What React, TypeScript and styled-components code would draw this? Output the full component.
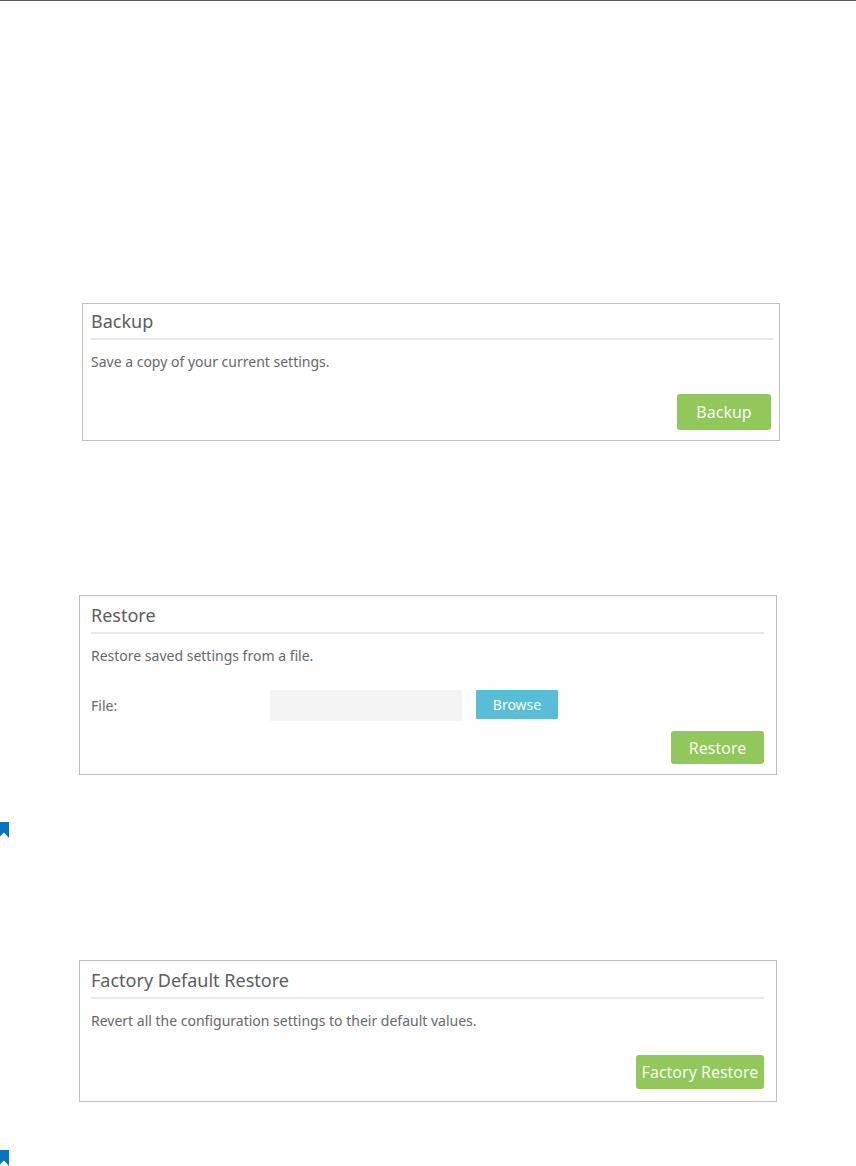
import React from 'react';
import styled, { createGlobalStyle } from 'styled-components';

const GlobalStyle = createGlobalStyle`
  * { box-sizing: border-box; }
  body {
    margin: 0;
    background: #fff;
    color: #68686c;
    font-family: "Noto Sans", "Open Sans", sans-serif;
  }
`;

const Page = styled.main`
  display: flex;
  flex-direction: column;
  border-top: 1px solid #58595b;
  padding-top: 302px;
`;

const Card = styled.section<{ $margin: string; $padding: string }>`
  display: flex;
  flex-direction: column;
  margin: ${p => p.$margin};
  padding: ${p => p.$padding};
  border: 1px solid #bfbfbf;
  background: #fefefe;
`;

const Title = styled.h2`
  margin: 0;
  padding-bottom: 4px;
  border-bottom: 2px solid #e8e8e8;
  color: #5c5d61;
  font-size: 18px;
  font-weight: 400;
  line-height: 26px;
`;

const Text = styled.p`
  margin: 12px 0 0;
  font-size: 14px;
  line-height: 20px;
`;

const FileRow = styled.div`
  display: grid;
  grid-template-columns: 179px 192px auto;
  justify-content: start;
  align-items: start;
  margin-top: 24px;
`;

const FileLabel = styled.label`
  font-size: 14px;
  line-height: 32px;
`;

const FileInput = styled.input`
  width: 100%;
  height: 31px;
  padding: 0 8px;
  border: 0;
  background: #f5f4f4;
  color: inherit;
  font: inherit;
  font-size: 14px;
`;

const Button = styled.button`
  padding: 0;
  border: 0;
  border-radius: 3px;
  background: #92c75b;
  color: #f4faec;
  font: inherit;
  font-size: 16px;
`;

const BrowseButton = styled(Button)`
  width: 82px;
  height: 29px;
  margin-left: 14px;
  border-radius: 1px;
  background: #59bdd7;
  font-size: 14px;
`;

const ActionButton = styled(Button)<{ $width: number; $height: number }>`
  width: ${p => p.$width}px;
  height: ${p => p.$height}px;
`;

const Actions = styled.div<{ $gap: number; $inset?: number }>`
  display: flex;
  justify-content: flex-end;
  margin-top: ${p => p.$gap}px;
  padding-right: ${p => p.$inset ?? 0}px;
`;

const Spacer = styled.div<{ $size: number }>`
  height: ${p => p.$size}px;
`;

const Mark = styled.svg`
  display: block;
  width: 9px;
  height: 16px;
`;

const Bookmark = () => (
  <Mark viewBox="0 0 9 16" aria-hidden="true">
    <path d="M0 0H9V16L4 10.5L0 14.5Z" fill="#0873c0" />
  </Mark>
);

export default function App() {
  return (
    <>
      <GlobalStyle />
      <Page>
        <Card $margin="0 76px 0 82px" $padding="4px 6px 10px 8px">
          <Title>Backup</Title>
          <Text>Save a copy of your current settings.</Text>
          <Actions $gap={22} $inset={2}>
            <ActionButton type="button" $width={94} $height={36}>Backup</ActionButton>
          </Actions>
        </Card>
        <Spacer $size={154} />
        <Card $margin="0 79px" $padding="6px 12px 10px 11px">
          <Title>Restore</Title>
          <Text>Restore saved settings from a file.</Text>
          <FileRow>
            <FileLabel htmlFor="file">File:</FileLabel>
            <FileInput id="file" type="text" />
            <BrowseButton type="button">Browse</BrowseButton>
          </FileRow>
          <Actions $gap={9}>
            <ActionButton type="button" $width={93} $height={33}>Restore</ActionButton>
          </Actions>
        </Card>
        <Spacer $size={47} />
        <Bookmark />
        <Spacer $size={122} />
        <Card $margin="0 79px" $padding="6px 12px 12px 11px">
          <Title>Factory Default Restore</Title>
          <Text>Revert all the configuration settings to their default values.</Text>
          <Actions $gap={24}>
            <ActionButton type="button" $width={128} $height={34}>Factory Restore</ActionButton>
          </Actions>
        </Card>
        <Spacer $size={48} />
        <Bookmark />
      </Page>
    </>
  );
}
